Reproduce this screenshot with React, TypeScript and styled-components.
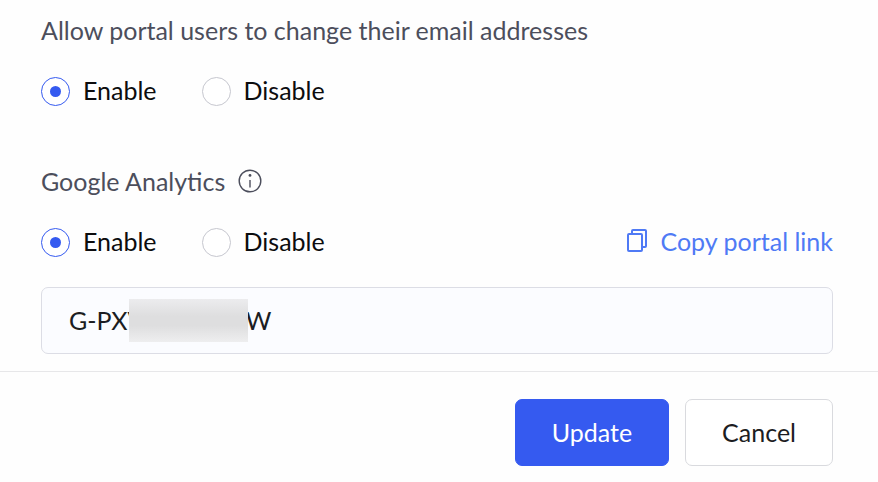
import React, { useState } from "react";
import styled, { createGlobalStyle, css } from "styled-components";

const GlobalStyle = createGlobalStyle`
  *, *::before, *::after { box-sizing: border-box; }
  body {
    margin: 0;
    background: #fefefe;
    color: #111217;
    font-family: Lato, "Open Sans", sans-serif;
    font-size: 25px;
    line-height: 32px;
  }
`;

const Settings = styled.form`
  display: flex;
  flex-direction: column;
`;

const Fields = styled.div`
  display: flex;
  flex-direction: column;
  gap: 59px;
  padding: 14px 45px 17px 41px;
`;

const Group = styled.fieldset`
  min-width: 0;
  margin: 0;
  padding: 0;
  border: 0;
`;

const Title = styled.legend`
  display: flex;
  align-items: center;
  gap: 13px;
  margin-bottom: 28px;
  padding: 0;
  color: #4c4e5c;
`;

const InfoButton = styled.button`
  display: flex;
  padding: 0;
  border: 0;
  background: none;
  color: inherit;
  cursor: pointer;
`;

const ChoiceRow = styled.div`
  display: flex;
  align-items: center;
  justify-content: space-between;
`;

const Choices = styled.div`
  display: flex;
  gap: 45px;
`;

const Choice = styled.label`
  display: flex;
  align-items: flex-end;
  gap: 13px;
  color: #0c0c0e;
  cursor: pointer;
`;

const Radio = styled.input`
  appearance: none;
  display: grid;
  place-items: center;
  width: 29px;
  height: 29px;
  margin: 0;
  border: 1px solid #c6c7cf;
  border-radius: 50%;
  background: #fff;

  &:checked {
    border-color: #355af0;
  }

  &:checked::before {
    content: "";
    width: 11px;
    height: 11px;
    border-radius: 50%;
    background: #355af0;
  }
`;

const CopyLink = styled.a`
  display: flex;
  align-items: center;
  gap: 12px;
  color: #4f7af5;
  text-decoration: none;
`;

const TrackingField = styled.div`
  position: relative;
  margin-top: 30px;
`;

const TrackingInput = styled.input`
  display: block;
  width: 100%;
  height: 67px;
  padding: 0 27px 2px;
  border: 1px solid #dcdde5;
  border-radius: 7px;
  background: #fbfcff;
  color: #1c1d22;
  font: inherit;
`;

const Redaction = styled.span`
  position: absolute;
  top: 12px;
  left: 88px;
  width: 119px;
  height: 43px;
  background: linear-gradient(#ececee, #dededf 40%, #dededf 62%, #eeeeef);
`;

const Footer = styled.footer`
  display: flex;
  justify-content: flex-end;
  gap: 16px;
  padding: 27px 45px 16px;
  border-top: 1px solid #e7e7e9;
`;

const Button = styled.button<{ $primary?: boolean }>`
  height: 67px;
  padding: 0 36px 2px;
  border: 1px solid #d9dade;
  border-radius: 7px;
  background: #fff;
  color: #1c1d22;
  font: inherit;
  cursor: pointer;

  ${({ $primary }) =>
    $primary &&
    css`
      border-color: #355af0;
      background: #355af0;
      color: #fff;
    `}
`;

const InfoIcon = () => (
  <svg width="24" height="24" viewBox="0 0 24 24" fill="none" aria-hidden="true">
    <circle cx="12" cy="12" r="10.8" stroke="currentColor" strokeWidth="1.4" />
    <circle cx="12" cy="6.4" r="1.4" fill="currentColor" />
    <path d="M12 11v7.4" stroke="currentColor" strokeWidth="1.4" />
  </svg>
);

const CopyIcon = () => (
  <svg width="22" height="26" viewBox="0 0 22 26" fill="none" stroke="currentColor" strokeWidth="2" aria-hidden="true">
    <rect x="2" y="6" width="14" height="17" rx="1" />
    <path d="M6 6V3q0-1 1-1h12q1 0 1 1v15q0 1-1 1h-3" />
  </svg>
);

type ToggleProps = {
  name: string;
  enabled: boolean;
  onChange: (enabled: boolean) => void;
};

const Toggle = ({ name, enabled, onChange }: ToggleProps) => (
  <Choices>
    <Choice>
      <Radio type="radio" name={name} checked={enabled} onChange={() => onChange(true)} />
      Enable
    </Choice>
    <Choice>
      <Radio type="radio" name={name} checked={!enabled} onChange={() => onChange(false)} />
      Disable
    </Choice>
  </Choices>
);

const HIDDEN_PART = "\u00a0".repeat(16);

export default function App() {
  const [emailChange, setEmailChange] = useState(true);
  const [analytics, setAnalytics] = useState(true);
  const [trackingId, setTrackingId] = useState(`G-PXV${HIDDEN_PART}W`);

  return (
    <>
      <GlobalStyle />
      <Settings onSubmit={(event) => event.preventDefault()}>
        <Fields>
          <Group>
            <Title>Allow portal users to change their email addresses</Title>
            <Toggle name="email-change" enabled={emailChange} onChange={setEmailChange} />
          </Group>
          <Group>
            <Title>
              Google Analytics
              <InfoButton type="button" aria-label="About Google Analytics">
                <InfoIcon />
              </InfoButton>
            </Title>
            <ChoiceRow>
              <Toggle name="analytics" enabled={analytics} onChange={setAnalytics} />
              <CopyLink href="#portal">
                <CopyIcon />
                Copy portal link
              </CopyLink>
            </ChoiceRow>
            <TrackingField>
              <TrackingInput
                aria-label="Google Analytics ID"
                value={trackingId}
                onChange={(event) => setTrackingId(event.target.value)}
              />
              <Redaction aria-hidden="true" />
            </TrackingField>
          </Group>
        </Fields>
        <Footer>
          <Button type="submit" $primary>
            Update
          </Button>
          <Button type="button">Cancel</Button>
        </Footer>
      </Settings>
    </>
  );
}
